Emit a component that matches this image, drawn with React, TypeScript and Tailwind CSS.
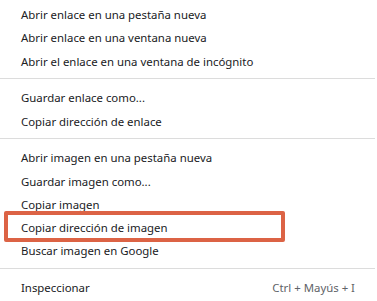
import React from "react";

type Item = { label: string; shortcut?: string; highlight?: boolean };

const groups: Item[][] = [
  [
    { label: "Abrir enlace en una pestaña nueva" },
    { label: "Abrir enlace en una ventana nueva" },
    { label: "Abrir el enlace en una ventana de incógnito" },
  ],
  [{ label: "Guardar enlace como..." }, { label: "Copiar dirección de enlace" }],
  [
    { label: "Abrir imagen en una pestaña nueva" },
    { label: "Guardar imagen como..." },
    { label: "Copiar imagen" },
    { label: "Copiar dirección de imagen", highlight: true },
    { label: "Buscar imagen en Google" },
  ],
  [{ label: "Inspeccionar", shortcut: "Ctrl + Mayús + I" }],
];

function Row({ item }: { item: Item }) {
  return (
    <div className="relative flex h-[23.25px] items-center justify-between pl-[21px] pr-[22px]">
      <span className="text-[#202124]">{item.label}</span>
      {item.shortcut && <span className="text-[#5f6368]">{item.shortcut}</span>}
      {item.highlight && (
        <div className="pointer-events-none absolute left-[4px] top-[-5px] h-[31px] w-[281px] rounded-[2px] border-[4px] border-[#dc6345]" />
      )}
    </div>
  );
}

export default function App() {
  return (
    <div
      className="h-[301px] w-[377px] overflow-hidden bg-white pt-[3px] text-[11.4px]"
      style={{ fontFamily: '"Noto Sans", "Open Sans", sans-serif' }}
    >
      {groups.map((g, gi) => (
        <div key={gi}>
          {gi > 0 && <div className="mb-[7.5px] mt-[5px] h-px w-[375px] bg-[#dcdcdc]" />}
          {g.map((it, i) => (
            <Row key={i} item={it} />
          ))}
        </div>
      ))}
    </div>
  );
}
